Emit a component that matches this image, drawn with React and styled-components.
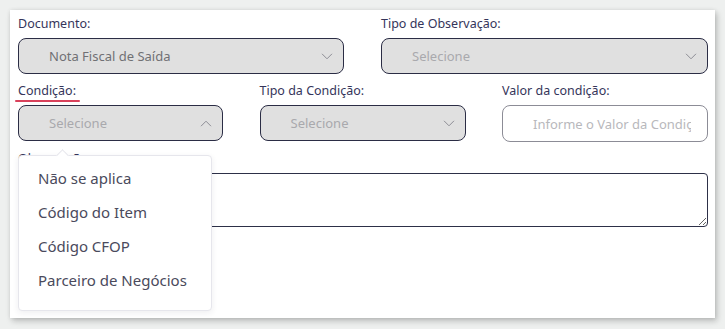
import React from 'react'
import styled, { createGlobalStyle } from 'styled-components'

const GlobalStyle = createGlobalStyle`
  body {
    margin: 0;
    padding: 10px;
    background: #eef0ef;
    font-family: "Noto Sans", "Open Sans", sans-serif;
  }
  * { box-sizing: border-box; }
`

const Card = styled.section`
  width: 705px;
  height: 308px;
  background: #fff;
  padding: 4px 7px 0 8px;
  box-shadow: 2px 3px 6px rgba(0, 0, 0, 0.22), 0 0 4px rgba(0, 0, 0, 0.08);
  display: flex;
  flex-direction: column;
  gap: 7px;
`

const Row = styled.div`
  display: grid;
  grid-template-columns: ${props => props.cols || '1fr'};
  column-gap: ${props => props.gap || '37px'};
`

const Field = styled.div`
  position: relative;
  display: flex;
  flex-direction: column;
  gap: 4px;
`

const Label = styled.label`
  height: 20px;
  line-height: 20px;
  font-size: 12.5px;
  color: #35355a;
  align-self: flex-start;
  position: relative;
  ${props => props.active && `
    &::after {
      content: '';
      position: absolute;
      left: -3px;
      right: -4px;
      bottom: -1px;
      height: 2px;
      border-radius: 1px;
      background: #d9415b;
    }
  `}
`

const SelectBox = styled.div`
  height: ${props => props.h || '36px'};
  background: #e0e0e0;
  border: 1px solid #2b2d45;
  border-radius: 8px;
  display: flex;
  align-items: center;
  justify-content: space-between;
  padding: 0 10px 0 ${props => props.pl || '30px'};
  font-size: 13px;
  color: ${props => (props.placeholder ? '#a9a9ad' : '#707074')};
`

const ValueInput = styled.input`
  height: 37px;
  width: 100%;
  border: 1px solid #8c8c96;
  border-radius: 8px;
  background: #fff;
  padding: 0 16px 0 30px;
  font-family: inherit;
  font-size: 13px;
  color: #555;
  outline: none;
  &::placeholder {
    color: #b8b8bc;
  }
`

const TextArea = styled.textarea`
  height: 54px;
  width: 100%;
  border: 1.5px solid #2d3048;
  border-radius: 4px;
  font-family: inherit;
  outline: none;
  display: block;
`

const Menu = styled.ul`
  position: absolute;
  top: 74px;
  left: 0;
  width: 194px;
  margin: 0;
  padding: 5px 0 13px;
  list-style: none;
  background: #fff;
  border: 1px solid #e6e6ec;
  border-radius: 4px;
  box-shadow: 0 2px 6px rgba(40, 40, 60, 0.08);
  z-index: 5;
  &::before {
    content: '';
    position: absolute;
    top: -5px;
    left: 39px;
    width: 8px;
    height: 8px;
    background: #fff;
    border-left: 1px solid #e6e6ec;
    border-top: 1px solid #e6e6ec;
    transform: rotate(45deg);
  }
`

const MenuItem = styled.li`
  height: 34px;
  line-height: 34px;
  padding-left: 19px;
  font-size: 15px;
  color: #4a4a5c;
`

const Chevron = ({ up }) => (
  <svg width="12" height="7" viewBox="0 0 12 7" fill="none">
    <path
      d={up ? 'M1 6.2L6 1.2L11 6.2' : 'M1 0.8L6 5.8L11 0.8'}
      stroke="#8d8d95"
      strokeWidth="1"
    />
  </svg>
)

const Select = ({ value, placeholder, up }) => (
  <SelectBox placeholder={placeholder ? 1 : 0}>
    <span>{value || placeholder}</span>
    <Chevron up={up} />
  </SelectBox>
)

const App = () => {
  const options = ['Não se aplica', 'Código do Item', 'Código CFOP', 'Parceiro de Negócios']
  return (
    <>
      <GlobalStyle />
      <Card>
        <Row cols="326px 327px">
          <Field>
            <Label>Documento:</Label>
            <Select value="Nota Fiscal de Saída" />
          </Field>
          <Field>
            <Label>Tipo de Observação:</Label>
            <Select placeholder="Selecione" />
          </Field>
        </Row>
        <Row cols="205px 206px 206px" gap="36.5px">
          <Field>
            <Label active>Condição:</Label>
            <Select placeholder="Selecione" up />
            <Menu>
              {options.map(o => (
                <MenuItem key={o}>{o}</MenuItem>
              ))}
            </Menu>
          </Field>
          <Field>
            <Label>Tipo da Condição:</Label>
            <Select placeholder="Selecione" />
          </Field>
          <Field>
            <Label>Valor da condição:</Label>
            <ValueInput placeholder="Informe o Valor da Condição" />
          </Field>
        </Row>
        <Row>
          <Field>
            <Label>Observação:</Label>
            <TextArea />
          </Field>
        </Row>
      </Card>
    </>
  )
}

export default App
